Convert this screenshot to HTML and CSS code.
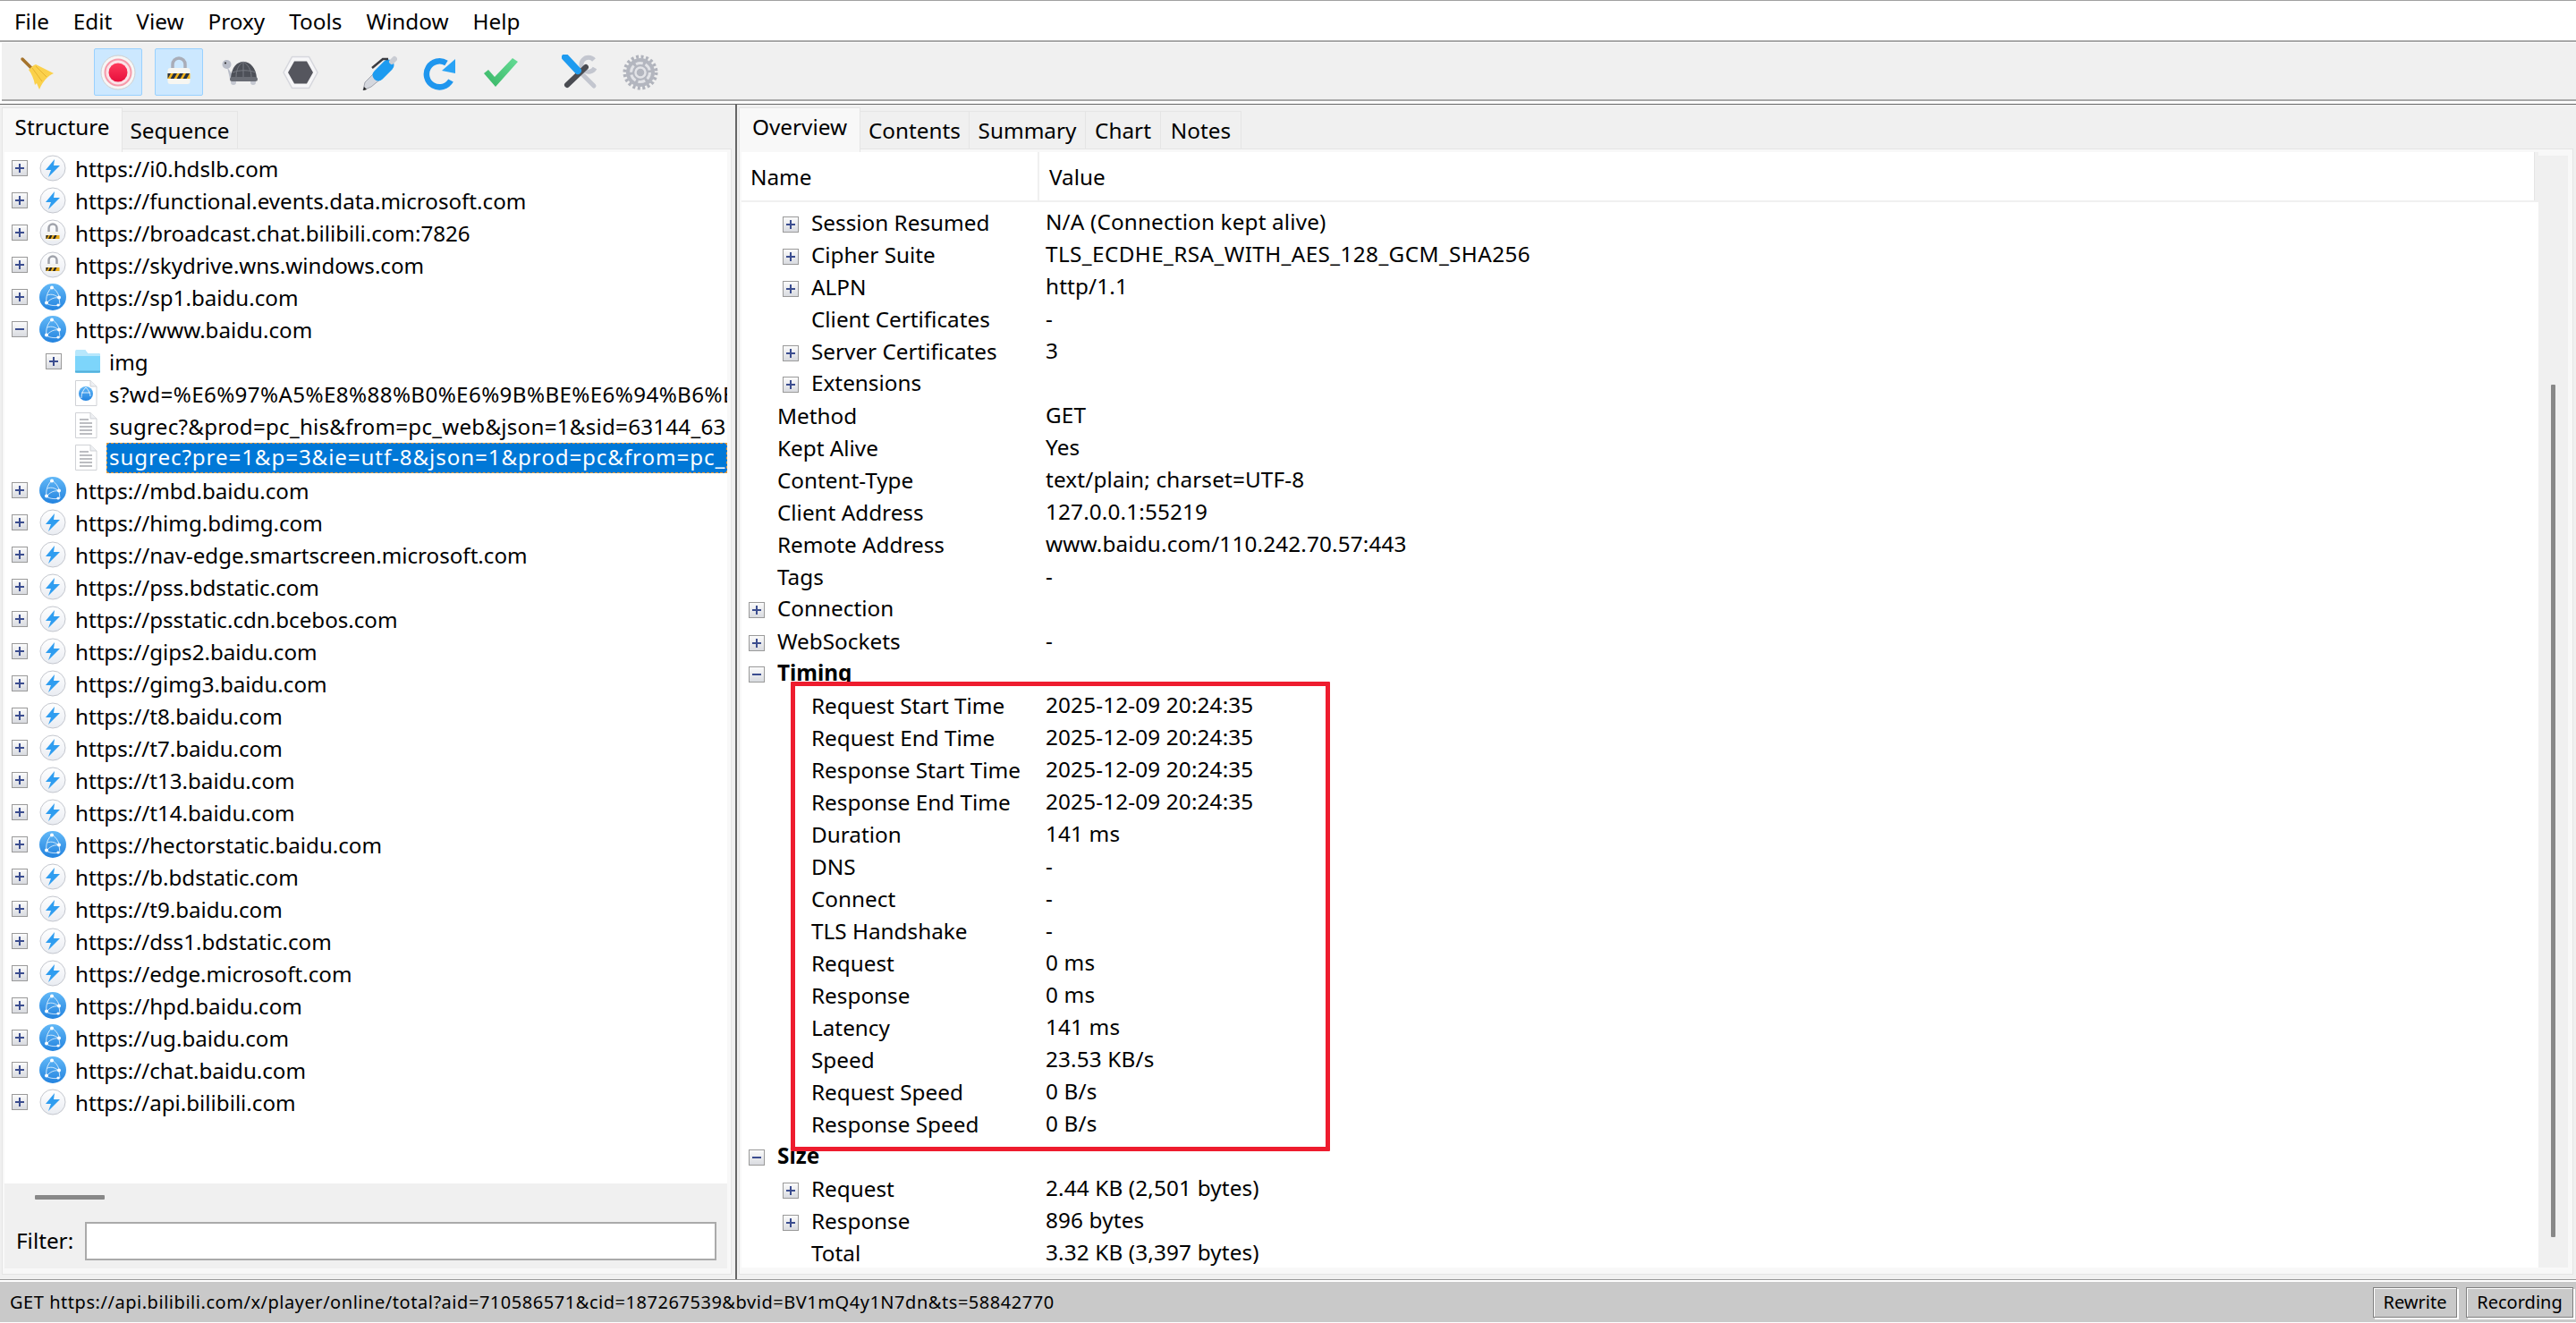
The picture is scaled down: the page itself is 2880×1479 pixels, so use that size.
FILE: index.html
```html
<!DOCTYPE html>
<html>
<head>
	<title>Charles</title>
	<link rel="stylesheet" href="styles.css">
</head>
<body>
	<svg class="sprite" width="0" height="0">
		<defs>
			<linearGradient id="red-g" x1="0" y1="0" x2="0" y2="1"><stop offset="0" stop-color="#ff3a5c"/><stop offset="1" stop-color="#e60f3c"/></linearGradient>
			<linearGradient id="blue-g" x1="0" y1="0" x2="0" y2="1"><stop offset="0" stop-color="#62b8f7"/><stop offset="1" stop-color="#2383df"/></linearGradient>
			<linearGradient id="green-g" x1="1" y1="0" x2="0" y2="1"><stop offset="0" stop-color="#66dc96"/><stop offset="1" stop-color="#37b564"/></linearGradient>
			<linearGradient id="disc-g" x1="0" y1="0" x2="0" y2="1"><stop offset="0" stop-color="#ffffff"/><stop offset="1" stop-color="#e9ecf2"/></linearGradient>
			<symbol id="broom" viewBox="0 0 40 40">
				<path d="M3 5 L13 15" stroke="#a5732c" stroke-width="3.5" stroke-linecap="round"/>
				<path d="M10 17 C13 14 15 12 18 11 L38 21 C31 24 26 30 22 39 L19 32 L17 34 C16 27 13 21 10 17 Z" fill="#fbd14b"/>
				<path d="M14 15 L25 30 M18 13 L30 25" stroke="#e6b22f" fill="none"/>
			</symbol>
			<symbol id="record" viewBox="0 0 40 40">
				<circle cx="20" cy="20" r="19" fill="#f6f6f6" stroke="#cfcfcf"/>
				<circle cx="20" cy="20" r="14.5" fill="#fbe4e8" stroke="#f69aaa" stroke-width="2"/>
				<circle cx="20" cy="20" r="10.5" fill="url(#red-g)"/>
			</symbol>
			<symbol id="lock" viewBox="0 0 40 40">
				<path d="M13 18 V11 A7 7 0 0 1 27 11 V18" fill="none" stroke="#a9adb8" stroke-width="3.5"/>
				<rect x="7.5" y="15" width="25" height="18" rx="3" fill="#f7f6f1"/>
				<rect x="7.5" y="21" width="25" height="6" fill="#f2b31d"/>
				<path d="M7.5 21 H11 L7.5 27 Z M14 21 H18 L14.5 27 H10.5 Z M21 21 H25 L21.5 27 H17.5 Z M28 21 H32 L28.5 27 H24.5 Z" fill="#263042"/>
			</symbol>
			<symbol id="turtle" viewBox="0 0 40 40">
				<circle cx="5.5" cy="11" r="5" fill="#b9bdc8"/>
				<circle cx="4" cy="9.5" r="1" fill="#222"/>
				<path d="M6 14 L13 24 L9 27 Z" fill="#b9bdc8"/>
				<circle cx="13" cy="31" r="3" fill="#c4c7d0"/>
				<circle cx="35" cy="31" r="3" fill="#c4c7d0"/>
				<path d="M10 26 C11 14 17 8 24 8 C32 8 38 15 39 26 Z" fill="#4d5058"/>
				<path d="M16 25 C16 17 19 11 24 8 C29 11 33 17 33 25 M24 8 V26 M12 20 C20 17 30 17 38 20" fill="none" stroke="#787b83"/>
				<rect x="9" y="25" width="31" height="5" rx="2.5" fill="#6a6d75"/>
			</symbol>
			<symbol id="stop" viewBox="0 0 40 40">
				<polygon points="1,20 10.5,2.5 29.5,2.5 39,20 29.5,37.5 10.5,37.5" fill="#f6f6f8" stroke="#d6d7dd" stroke-width="1.5"/>
				<polygon points="6,20 13,7.5 27,7.5 34,20 27,32.5 13,32.5" fill="#55565e"/>
			</symbol>
			<symbol id="pen" viewBox="0 0 40 40">
				<path d="M2 40 L4 31 L15 20 L22 27 L11 36 Z" fill="#d4d7de" stroke="#a1a4ad"/>
				<path d="M2 40 L3 36 L6 39 Z" fill="#222"/>
				<path d="M19 23 L30 12" stroke="#1d9bf0" stroke-width="13" stroke-linecap="round"/>
				<path d="M12 15 L24 5 L30 5" stroke="#3a3b40" stroke-width="2.5" fill="none"/>
				<path d="M34 8 L37 5" stroke="#c9ccd3" stroke-width="6" stroke-linecap="round"/>
			</symbol>
			<symbol id="refresh" viewBox="0 0 40 40">
				<path d="M27 9.5 A14.5 14.5 0 1 0 32 29" fill="none" stroke="#1f96ee" stroke-width="6.5"/>
				<polygon points="37,5 37,21 22,18" fill="#2aa3f5"/>
			</symbol>
			<symbol id="check" viewBox="0 0 40 40">
				<polygon points="1,21 14,36 39,8 33,4 13,25 6,17" fill="url(#green-g)"/>
			</symbol>
			<symbol id="tools" viewBox="0 0 40 40">
				<path d="M21 20 L36 35" stroke="#c3c6cf" stroke-width="5" stroke-linecap="round"/>
				<path d="M36 6 A8 8 0 1 0 37 15" fill="none" stroke="#c3c6cf" stroke-width="5"/>
				<path d="M27 14 L6 34" stroke="#4a4c52" stroke-width="6" stroke-linecap="round"/>
				<path d="M4 3 L18 18" stroke="#1e9bf0" stroke-width="8" stroke-linecap="round"/>
			</symbol>
			<symbol id="gear" viewBox="0 0 40 40">
				<circle cx="20" cy="20" r="17.5" fill="none" stroke="#b0b3bc" stroke-width="4" stroke-dasharray="3 2.5"/>
				<circle cx="20" cy="20" r="16" fill="#b3b6bf"/>
				<circle cx="20" cy="20" r="10.5" fill="none" stroke="#e2e3e7" stroke-width="3" stroke-dasharray="8 3"/>
				<circle cx="20" cy="20" r="5.5" fill="none" stroke="#e2e3e7" stroke-width="2.5"/>
			</symbol>
			<symbol id="bolt" viewBox="0 0 30 30">
				<circle cx="15" cy="15" r="14" fill="url(#disc-g)" stroke="#c4c7ce"/>
				<polygon points="17,5 7,17 13,17 10,25 23,12 16,12" fill="#2f9df0"/>
			</symbol>
			<symbol id="slock" viewBox="0 0 30 30">
				<circle cx="15" cy="15" r="14" fill="url(#disc-g)" stroke="#c4c7ce"/>
				<path d="M10.5 15 V10 A4.5 4.5 0 0 1 19.5 10 V15" fill="none" stroke="#a0a3ab" stroke-width="2.5"/>
				<rect x="7.5" y="14" width="15" height="10" rx="1.5" fill="#f4f3ee"/>
				<rect x="7.5" y="18" width="15" height="4" fill="#e5a91a"/>
				<path d="M7.5 18 H10 L8 22 H7.5 Z M12 18 H14.5 L12.5 22 H10 Z M17 18 H19.5 L17.5 22 H15 Z" fill="#222"/>
			</symbol>
			<symbol id="globe" viewBox="0 0 30 30">
				<circle cx="15" cy="15" r="15" fill="url(#blue-g)"/>
				<g fill="none" stroke="#fff" stroke-opacity=".75">
					<path d="M14 4 C9 9 7 15 8 22 C12 25 18 25 23 24 M14 4 C20 8 22 13 22 16 C17 15 12 17 8 22 M22 16 L23 24"/>
					<path d="M9 13 C14 11 18 13 22 16"/>
				</g>
				<g fill="#fff">
					<circle cx="14" cy="4.5" r="2"/><circle cx="22" cy="15.5" r="2"/><circle cx="8" cy="21.5" r="2"/><circle cx="21" cy="24" r="1.6"/>
				</g>
			</symbol>
			<symbol id="folder" viewBox="0 0 28 28">
				<path d="M1 3 Q1 1 3 1 H11 L14 5 H26 Q28 5 28 7 V25 Q28 27 26 27 H2 Q0 27 0 25 V3 Z" fill="#7dd5fb"/>
				<path d="M0 3 Q0 1 2 1 H11 L14 5 H26 Q28 5 28 7 V8 H0 Z" fill="#b7e7fc"/>
				<path d="M0 25.5 H28" stroke="#55aed8" stroke-width="2"/>
			</symbol>
			<symbol id="page-web" viewBox="0 0 28 30">
				<path d="M.5 .5 H17 L24 7 V28.5 H.5 Z" fill="#fff" stroke="#d0d2d6"/>
				<path d="M17 .5 V7 H24" fill="#eef0f3" stroke="#d0d2d6"/>
				<circle cx="12" cy="15" r="8" fill="url(#blue-g)"/>
				<path d="M12 8 C8 12 7 16 7 20 M12 8 C15 11 17 15 17 18 M7 14 H17" fill="none" stroke="#fff" stroke-opacity=".8"/>
			</symbol>
			<symbol id="page-text" viewBox="0 0 28 30">
				<path d="M.5 .5 H17 L24 7 V28.5 H.5 Z" fill="#fff" stroke="#d0d2d6"/>
				<path d="M17 .5 V7 H24" fill="#eef0f3" stroke="#d0d2d6"/>
				<path d="M5 8 H15 M5 12 H19 M5 16 H19 M5 20 H19 M5 24 H19" stroke="#a6a8ad" stroke-width="1.5"/>
			</symbol>
		</defs>
	</svg>

	<div class="menubar">
		<span>File</span><span>Edit</span><span>View</span><span>Proxy</span><span>Tools</span><span>Window</span><span>Help</span>
	</div>

	<div class="toolbar">
		<div class="tool"><svg class="tool-ico"><use href="#broom"/></svg></div>
		<div class="tool-sep wide"></div>
		<div class="tool on"><svg class="tool-ico"><use href="#record"/></svg></div>
		<div class="tool on"><svg class="tool-ico"><use href="#lock"/></svg></div>
		<div class="tool"><svg class="tool-ico"><use href="#turtle"/></svg></div>
		<div class="tool"><svg class="tool-ico"><use href="#stop"/></svg></div>
		<div class="tool-sep"></div>
		<div class="tool"><svg class="tool-ico"><use href="#pen"/></svg></div>
		<div class="tool"><svg class="tool-ico"><use href="#refresh"/></svg></div>
		<div class="tool"><svg class="tool-ico"><use href="#check"/></svg></div>
		<div class="tool-sep"></div>
		<div class="tool"><svg class="tool-ico"><use href="#tools"/></svg></div>
		<div class="tool"><svg class="tool-ico"><use href="#gear"/></svg></div>
	</div>

	<div class="main">
		<div class="left">
			<div class="tabs">
				<div class="tab on tab-structure">Structure</div>
				<div class="tab tab-sequence">Sequence</div>
			</div>
			<div class="panel left-panel">
				<div class="tree">
					<div class="node"><i class="exp"></i><svg class="ico"><use href="#bolt"/></svg><span class="label">https://i0.hdslb.com</span></div>
					<div class="node"><i class="exp"></i><svg class="ico"><use href="#bolt"/></svg><span class="label">https://functional.events.data.microsoft.com</span></div>
					<div class="node"><i class="exp"></i><svg class="ico"><use href="#slock"/></svg><span class="label">https://broadcast.chat.bilibili.com:7826</span></div>
					<div class="node"><i class="exp"></i><svg class="ico"><use href="#slock"/></svg><span class="label">https://skydrive.wns.windows.com</span></div>
					<div class="node"><i class="exp"></i><svg class="ico"><use href="#globe"/></svg><span class="label">https://sp1.baidu.com</span></div>
					<div class="node"><i class="exp open"></i><svg class="ico"><use href="#globe"/></svg><span class="label">https://www.baidu.com</span></div>
					<div class="node child"><i class="exp"></i><svg class="ico-sm"><use href="#folder"/></svg><span class="label">img</span></div>
					<div class="node child"><i class="exp none"></i><svg class="ico-sm"><use href="#page-web"/></svg><span class="label query">s?wd=%E6%97%A5%E8%88%B0%E6%9B%BE%E6%94%B6%E5%88%B0</span></div>
					<div class="node child"><i class="exp none"></i><svg class="ico-sm"><use href="#page-text"/></svg><span class="label query sug">sugrec?&amp;prod=pc_his&amp;from=pc_web&amp;json=1&amp;sid=63144_63</span></div>
					<div class="node child"><i class="exp none"></i><svg class="ico-sm"><use href="#page-text"/></svg><span class="label selected">sugrec?pre=1&amp;p=3&amp;ie=utf-8&amp;json=1&amp;prod=pc&amp;from=pc_</span></div>
					<div class="node"><i class="exp"></i><svg class="ico"><use href="#globe"/></svg><span class="label">https://mbd.baidu.com</span></div>
					<div class="node"><i class="exp"></i><svg class="ico"><use href="#bolt"/></svg><span class="label">https://himg.bdimg.com</span></div>
					<div class="node"><i class="exp"></i><svg class="ico"><use href="#bolt"/></svg><span class="label">https://nav-edge.smartscreen.microsoft.com</span></div>
					<div class="node"><i class="exp"></i><svg class="ico"><use href="#bolt"/></svg><span class="label">https://pss.bdstatic.com</span></div>
					<div class="node"><i class="exp"></i><svg class="ico"><use href="#bolt"/></svg><span class="label">https://psstatic.cdn.bcebos.com</span></div>
					<div class="node"><i class="exp"></i><svg class="ico"><use href="#bolt"/></svg><span class="label">https://gips2.baidu.com</span></div>
					<div class="node"><i class="exp"></i><svg class="ico"><use href="#bolt"/></svg><span class="label">https://gimg3.baidu.com</span></div>
					<div class="node"><i class="exp"></i><svg class="ico"><use href="#bolt"/></svg><span class="label">https://t8.baidu.com</span></div>
					<div class="node"><i class="exp"></i><svg class="ico"><use href="#bolt"/></svg><span class="label">https://t7.baidu.com</span></div>
					<div class="node"><i class="exp"></i><svg class="ico"><use href="#bolt"/></svg><span class="label">https://t13.baidu.com</span></div>
					<div class="node"><i class="exp"></i><svg class="ico"><use href="#bolt"/></svg><span class="label">https://t14.baidu.com</span></div>
					<div class="node"><i class="exp"></i><svg class="ico"><use href="#globe"/></svg><span class="label">https://hectorstatic.baidu.com</span></div>
					<div class="node"><i class="exp"></i><svg class="ico"><use href="#bolt"/></svg><span class="label">https://b.bdstatic.com</span></div>
					<div class="node"><i class="exp"></i><svg class="ico"><use href="#bolt"/></svg><span class="label">https://t9.baidu.com</span></div>
					<div class="node"><i class="exp"></i><svg class="ico"><use href="#bolt"/></svg><span class="label">https://dss1.bdstatic.com</span></div>
					<div class="node"><i class="exp"></i><svg class="ico"><use href="#bolt"/></svg><span class="label">https://edge.microsoft.com</span></div>
					<div class="node"><i class="exp"></i><svg class="ico"><use href="#globe"/></svg><span class="label">https://hpd.baidu.com</span></div>
					<div class="node"><i class="exp"></i><svg class="ico"><use href="#globe"/></svg><span class="label">https://ug.baidu.com</span></div>
					<div class="node"><i class="exp"></i><svg class="ico"><use href="#globe"/></svg><span class="label">https://chat.baidu.com</span></div>
					<div class="node"><i class="exp"></i><svg class="ico"><use href="#bolt"/></svg><span class="label">https://api.bilibili.com</span></div>
				</div>
				<div class="tree-foot">
					<div class="hthumb"></div>
					<div class="filter">
						<label for="filter">Filter:</label>
						<input id="filter" type="text">
					</div>
				</div>
			</div>
		</div>

		<div class="divider"></div>

		<div class="right">
			<div class="tabs">
				<div class="tab on tab-overview">Overview</div>
				<div class="tab tab-contents">Contents</div>
				<div class="tab tab-summary">Summary</div>
				<div class="tab tab-chart">Chart</div>
				<div class="tab tab-notes">Notes</div>
			</div>
			<div class="panel right-panel">
				<div class="table">
					<div class="thead">
						<div class="th name-col">Name</div>
						<div class="th">Value</div>
					</div>
					<div class="tbody">
						<div class="row"><div class="name sub"><i class="exp"></i>Session Resumed</div><div class="val">N/A (Connection kept alive)</div></div>
						<div class="row"><div class="name sub"><i class="exp"></i>Cipher Suite</div><div class="val caps">TLS_ECDHE_RSA_WITH_AES_128_GCM_SHA256</div></div>
						<div class="row"><div class="name sub"><i class="exp"></i>ALPN</div><div class="val">http/1.1</div></div>
						<div class="row"><div class="name sub"><i class="exp none"></i>Client Certificates</div><div class="val">-</div></div>
						<div class="row"><div class="name sub"><i class="exp"></i>Server Certificates</div><div class="val">3</div></div>
						<div class="row"><div class="name sub"><i class="exp"></i>Extensions</div><div class="val"></div></div>
						<div class="row"><div class="name"><i class="exp none"></i>Method</div><div class="val">GET</div></div>
						<div class="row"><div class="name"><i class="exp none"></i>Kept Alive</div><div class="val">Yes</div></div>
						<div class="row"><div class="name"><i class="exp none"></i>Content-Type</div><div class="val">text/plain; charset=UTF-8</div></div>
						<div class="row"><div class="name"><i class="exp none"></i>Client Address</div><div class="val">127.0.0.1:55219</div></div>
						<div class="row"><div class="name"><i class="exp none"></i>Remote Address</div><div class="val">www.baidu.com/110.242.70.57:443</div></div>
						<div class="row"><div class="name"><i class="exp none"></i>Tags</div><div class="val">-</div></div>
						<div class="row"><div class="name"><i class="exp"></i>Connection</div><div class="val"></div></div>
						<div class="row"><div class="name"><i class="exp"></i>WebSockets</div><div class="val">-</div></div>
						<div class="row"><div class="name group"><i class="exp open"></i>Timing</div><div class="val"></div></div>
						<div class="row"><div class="name sub"><i class="exp none"></i>Request Start Time</div><div class="val">2025-12-09 20:24:35</div></div>
						<div class="row"><div class="name sub"><i class="exp none"></i>Request End Time</div><div class="val">2025-12-09 20:24:35</div></div>
						<div class="row"><div class="name sub"><i class="exp none"></i>Response Start Time</div><div class="val">2025-12-09 20:24:35</div></div>
						<div class="row"><div class="name sub"><i class="exp none"></i>Response End Time</div><div class="val">2025-12-09 20:24:35</div></div>
						<div class="row"><div class="name sub"><i class="exp none"></i>Duration</div><div class="val">141 ms</div></div>
						<div class="row"><div class="name sub"><i class="exp none"></i>DNS</div><div class="val">-</div></div>
						<div class="row"><div class="name sub"><i class="exp none"></i>Connect</div><div class="val">-</div></div>
						<div class="row"><div class="name sub"><i class="exp none"></i>TLS Handshake</div><div class="val">-</div></div>
						<div class="row"><div class="name sub"><i class="exp none"></i>Request</div><div class="val">0 ms</div></div>
						<div class="row"><div class="name sub"><i class="exp none"></i>Response</div><div class="val">0 ms</div></div>
						<div class="row"><div class="name sub"><i class="exp none"></i>Latency</div><div class="val">141 ms</div></div>
						<div class="row"><div class="name sub"><i class="exp none"></i>Speed</div><div class="val">23.53 KB/s</div></div>
						<div class="row"><div class="name sub"><i class="exp none"></i>Request Speed</div><div class="val">0 B/s</div></div>
						<div class="row"><div class="name sub"><i class="exp none"></i>Response Speed</div><div class="val">0 B/s</div></div>
						<div class="row"><div class="name group"><i class="exp open"></i>Size</div><div class="val"></div></div>
						<div class="row"><div class="name sub"><i class="exp"></i>Request</div><div class="val">2.44 KB (2,501 bytes)</div></div>
						<div class="row"><div class="name sub"><i class="exp"></i>Response</div><div class="val">896 bytes</div></div>
						<div class="row"><div class="name sub"><i class="exp none"></i>Total</div><div class="val">3.32 KB (3,397 bytes)</div></div>
						<div class="mark"></div>
					</div>
				</div>
				<div class="vscroll"><div class="vthumb"></div></div>
			</div>
		</div>
	</div>

	<div class="status">
		<span class="status-text">GET https://api.bilibili.com/x/player/online/total?aid=710586571&amp;cid=187267539&amp;bvid=BV1mQ4y1N7dn&amp;ts=58842770</span>
		<button class="status-btn rewrite">Rewrite</button>
		<button class="status-btn recording">Recording</button>
	</div>
</body>
</html>
```

FILE: styles.css
```css
body {
	display: flex;
	flex-direction: column;
	width: 2880px;
	height: 1479px;
	margin: 0;
	overflow: hidden;
	font-family: "Noto Sans", sans-serif;
	font-size: 24.3px;
	color: #000;
	background-color: #fff;
}
.sprite {
	display: block;
	width: 0;
	height: 0;
}

/* menu + toolbar */
.menubar {
	display: flex;
	gap: 27px;
	height: 44px;
	padding-left: 16px;
	align-items: center;
	border-top: 1px solid #a0a0a0;
	border-bottom: 2px solid #a8a8a8;
}
.toolbar {
	display: flex;
	gap: 14px;
	height: 65px;
	margin: 1px 0 0 2px;
	padding: 6px 0 0 13px;
	box-sizing: border-box;
	align-items: flex-start;
	background-color: #f0f0f0;
	border-bottom: 2px solid #a8a8a8;
}
.tool {
	display: flex;
	width: 54px;
	height: 53px;
	box-sizing: border-box;
	align-items: center;
	justify-content: center;
	border: 1px solid transparent;
	border-radius: 2px;
}
.tool.on {
	background-color: #cce8ff;
	border-color: #99d1ff;
}
.tool-ico {
	width: 40px;
	height: 40px;
}
.tool-sep {
	width: 6px;
}
.tool-sep.wide {
	width: 8px;
}

/* panes */
.main {
	display: flex;
	flex: 1;
	min-height: 0;
	margin-top: 3px;
	background-color: #f0f0f0;
	border-top: 1px solid #666;
	border-bottom: 1px solid #999;
}
.left {
	display: flex;
	flex-direction: column;
	width: 816px;
	margin: 3px 4px 5px 2px;
}
.divider {
	width: 2px;
	background-color: #666;
}
.right {
	display: flex;
	flex-direction: column;
	flex: 1;
	min-width: 0;
	margin: 3px 3px 5px 2px;
}
.tabs {
	display: flex;
	height: 46px;
	flex: none;
	align-items: flex-end;
}
.tab {
	display: flex;
	height: 42px;
	box-sizing: border-box;
	align-items: center;
	justify-content: center;
	background-color: #f0f0f0;
	border: 1px solid #e5e5e5;
	border-bottom: 0;
	border-left: 0;
}
.tab.on {
	position: relative;
	z-index: 1;
	height: 50px;
	margin-bottom: -4px;
	padding-bottom: 8px;
	background-color: #f8f8f8;
	border-left: 1px solid #e5e5e5;
}
.tab-structure { width: 135px; }
.tab-sequence { width: 129px; }
.tab-overview { width: 136px; }
.tab-contents { width: 122px; }
.tab-summary { width: 130px; }
.tab-chart { width: 84px; }
.tab-notes { width: 90px; }
.panel {
	display: flex;
	flex: 1;
	min-height: 0;
	background-color: #f8f8f8;
	border: 1px solid #e5e5e5;
}
.left-panel {
	flex-direction: column;
	padding: 3px 4px 6px 2px;
}

/* tree */
.tree {
	flex: 1;
	min-height: 0;
	overflow: hidden;
	font-size: 24.15px;
	background-color: #fff;
}
.node {
	display: flex;
	height: 36px;
	padding-left: 8px;
	align-items: center;
	white-space: nowrap;
}
.node.child {
	padding-left: 46px;
}
.ico {
	flex: none;
	width: 30px;
	height: 30px;
	margin-left: 13px;
}
.ico-sm {
	flex: none;
	width: 28px;
	height: 30px;
	margin-left: 15px;
}
.label {
	min-width: 0;
	margin-left: 7px;
	padding: 0 3px;
	overflow: hidden;
}
.label.query {
	flex: 1;
	letter-spacing: .4px;
}
.label.query.sug {
	letter-spacing: .25px;
}
.label.selected {
	flex: 1;
	height: 34px;
	box-sizing: border-box;
	padding: 0 2px;
	line-height: 29px;
	letter-spacing: .9px;
	color: #fff;
	background-color: #0078d7;
	border: 1px dashed #f09a30;
}
.exp {
	display: block;
	position: relative;
	flex: none;
	width: 18px;
	height: 18px;
	box-sizing: border-box;
	background: linear-gradient(#fbfbfb, #d9dbe0);
	border: 1px solid #9a9a9a;
}
.exp::before {
	content: "";
	position: absolute;
	left: 3px;
	top: 7px;
	width: 10px;
	height: 2px;
	background-color: #3b4d8f;
}
.exp::after {
	content: "";
	position: absolute;
	left: 7px;
	top: 3px;
	width: 2px;
	height: 10px;
	background-color: #3b4d8f;
}
.exp.open::after {
	display: none;
}
.exp.none {
	visibility: hidden;
}
.tree-foot {
	display: flex;
	flex-direction: column;
	flex: none;
	height: 95px;
	box-sizing: border-box;
	padding-top: 13px;
	background-color: #f0f0f0;
}
.hthumb {
	width: 78px;
	height: 5px;
	margin-left: 34px;
	background-color: #888;
	border-radius: 1px;
}
.filter {
	display: flex;
	margin-top: 25px;
	padding-left: 13px;
	align-items: center;
}
.filter label {
	width: 77px;
	flex: none;
	margin-bottom: 3px;
}
.filter input {
	width: 706px;
	height: 43px;
	box-sizing: border-box;
	background-color: #fff;
	border: 2px solid #aaa;
}

/* overview table */
.right-panel {
	padding: 3px 5px 7px 2px;
}
.table {
	display: flex;
	flex-direction: column;
	flex: 1;
	min-width: 0;
	background-color: #f0f0f0;
}
.thead {
	display: flex;
	height: 54px;
	flex: none;
	margin-right: 4px;
	align-items: center;
	background-color: #fff;
	border-right: 1px solid #e5e5e5;
}
.th {
	padding: 1px 0 0 11px;
}
.name-col {
	width: 321px;
	padding-left: 10px;
	line-height: 54px;
	border-right: 2px solid #f0f0f0;
}
.tbody {
	position: relative;
	flex: 1;
	min-height: 0;
	margin-top: 2px;
	padding-top: 5px;
	background-color: #fff;
}
.row {
	display: grid;
	grid-template-columns: 340px 1fr;
	height: 36px;
	align-items: center;
	white-space: nowrap;
}
.name {
	display: flex;
	margin-bottom: 4px;
	padding-left: 8px;
	align-items: center;
}
.name .exp {
	margin: 4px 14px 0 0;
}
.name.sub {
	padding-left: 46px;
}
.name.group {
	font-weight: bold;
}
.val {
	margin-bottom: 6px;
	letter-spacing: .15px;
}
.val.caps {
	letter-spacing: .4px;
}
.mark {
	position: absolute;
	left: 55px;
	top: 536px;
	width: 603px;
	height: 525px;
	box-sizing: border-box;
	border: 5px solid #ee1c2e;
	border-radius: 1px;
}
.vscroll {
	display: flex;
	flex: none;
	width: 33px;
	margin-top: 4px;
	justify-content: center;
	background-color: #f0f0f0;
}
.vthumb {
	width: 5px;
	height: 953px;
	margin-top: 256px;
	background-color: #888;
	border-radius: 1px;
}

/* status bar */
.status {
	display: flex;
	flex: none;
	height: 45px;
	margin: 2px 0 1px;
	padding: 0 3px 0 11px;
	box-sizing: border-box;
	align-items: center;
	font-size: 20px;
	background-color: #c9c9c9;
}
.status-text {
	flex: 1;
	letter-spacing: .54px;
}
.status-btn {
	height: 34px;
	padding: 0;
	font-family: inherit;
	font-size: 20px;
	color: #000;
	background-color: #c9c9c9;
	border: 1px solid #7f7f7f;
	box-shadow: 2px 2px 0 #fff, inset 1px 1px 0 #fff;
}
.rewrite {
	width: 94px;
	margin-right: 10px;
}
.recording {
	width: 120px;
}
```
